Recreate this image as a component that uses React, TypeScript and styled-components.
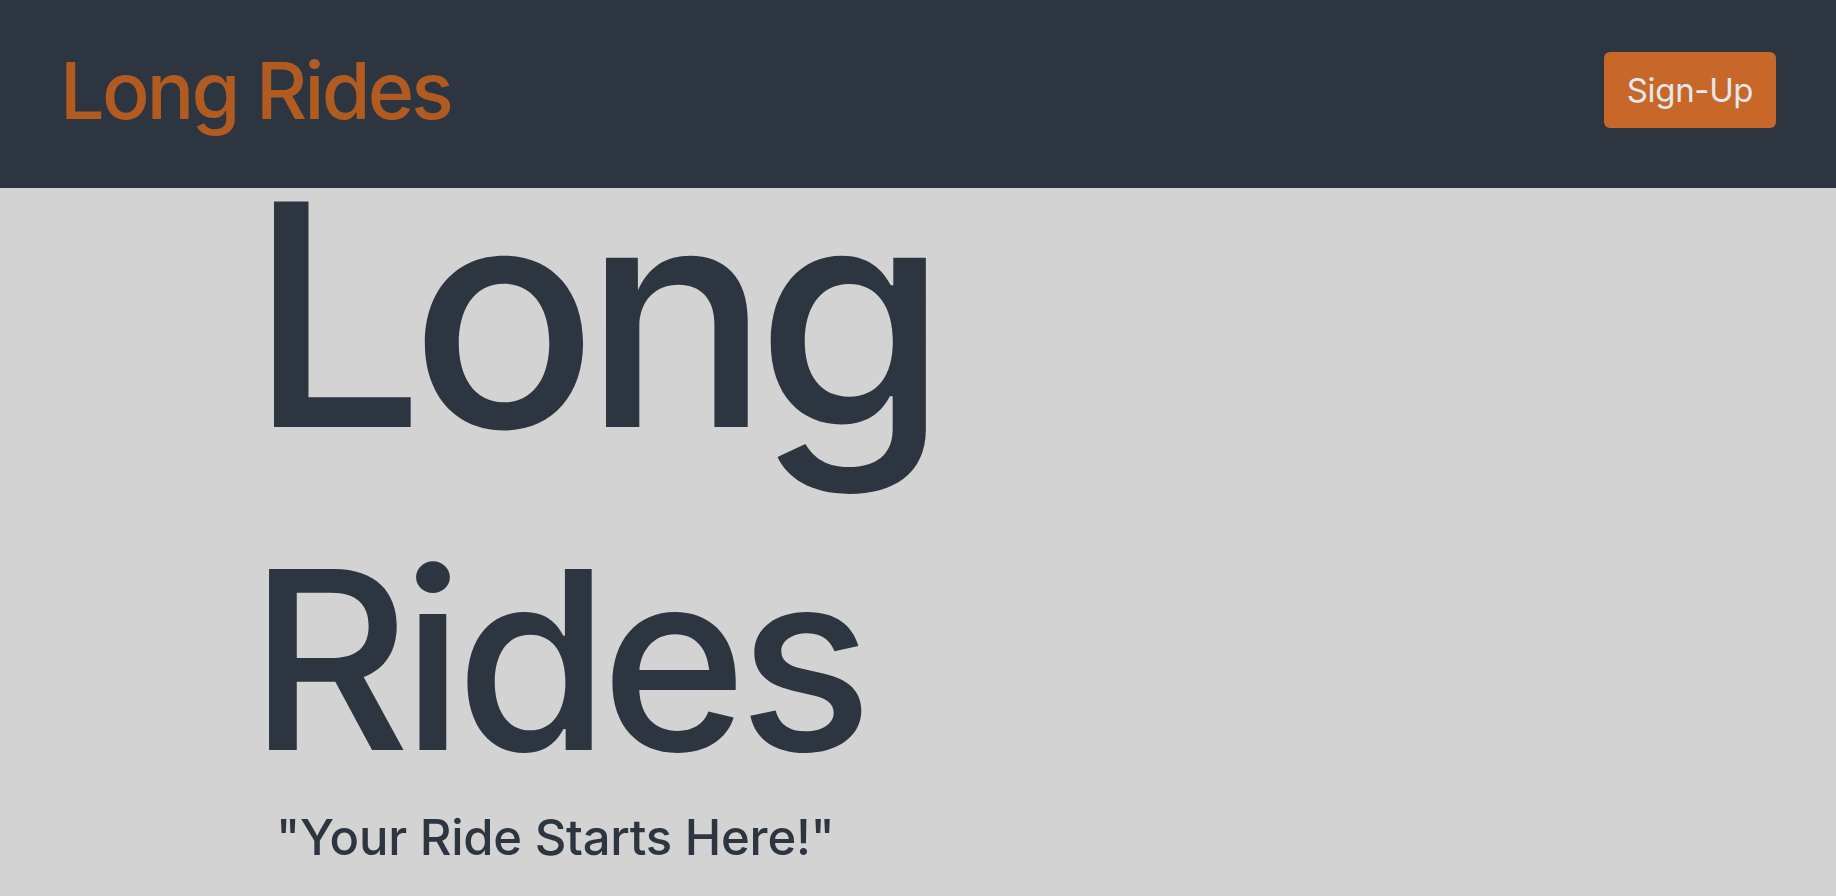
import React from "react";
import styled, { createGlobalStyle } from "styled-components";

const Global = createGlobalStyle`
  html, body { margin: 0; padding: 0; }
  body {
    background: #d3d3d3;
    font-family: Inter, "Noto Sans", sans-serif;
    overflow: hidden;
  }
`;

const Header = styled.header`
  height: 188px;
  box-sizing: border-box;
  background: #2d3640;
  display: flex;
  align-items: center;
  justify-content: space-between;
  padding: 0 60px 8px 60px;
`;

const Logo = styled.div`
  font-size: 79px;
  font-weight: 500;
  letter-spacing: -0.035em;
  line-height: 1;
  color: #b25b21;
`;

const SignUp = styled.button`
  width: 172px;
  height: 76px;
  border: none;
  border-radius: 6px;
  background: #c8672a;
  color: #e2e8eb;
  font-family: Inter, "Noto Sans", sans-serif;
  font-size: 33px;
  letter-spacing: -0.01em;
  cursor: pointer;
`;

const Hero = styled.main`
  padding: 0 0 0 249px;
  color: #2d3640;
`;

const BigWord = styled.h1<{ $size: number; $track: number; $lh: number; $top: number }>`
  margin: ${(p) => p.$top}px 0 0 0;
  font-size: ${(p) => p.$size}px;
  font-weight: 500;
  letter-spacing: ${(p) => p.$track}em;
  line-height: ${(p) => p.$lh};
`;

const Tagline = styled.p`
  margin: 29px 0 0 0;
  font-size: 49px;
  font-weight: 500;
  letter-spacing: -0.005em;
  line-height: 1;
  padding-left: 27px;
`;

export default function App() {
  return (
    <>
      <Global />
      <Header>
        <Logo>Long Rides</Logo>
        <SignUp>Sign-Up</SignUp>
      </Header>
      <Hero>
        <BigWord $size={310} $track={-0.045} $lh={0.82} $top={0}>
          Long
        </BigWord>
        <BigWord $size={249} $track={-0.035} $lh={1} $top={93}>
          Rides
        </BigWord>
        <Tagline>"Your Ride Starts Here!"</Tagline>
      </Hero>
    </>
  );
}
